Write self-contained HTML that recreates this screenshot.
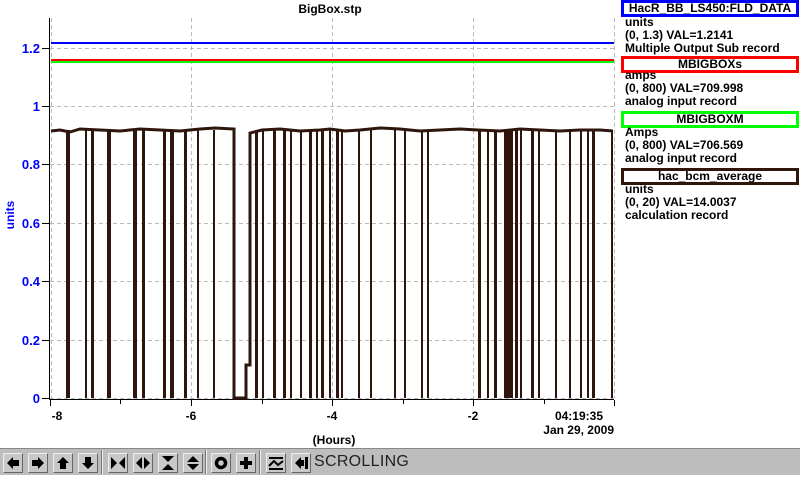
<!DOCTYPE html>
<html><head><meta charset="utf-8"><style>
html,body{margin:0;padding:0;background:#fff;width:800px;height:474px;overflow:hidden;font-family:"Liberation Sans",sans-serif;}
.t{position:absolute;font-size:12px;font-weight:bold;color:#000;white-space:nowrap;line-height:13px}
.box{position:absolute;left:621px;width:172px;height:11px;border:3px solid;text-align:center;font-size:12px;font-weight:bold;line-height:11px;overflow:hidden;white-space:nowrap}
#tb{position:absolute;left:0;top:448px;width:800px;height:26px;background:#bdbdbd;border-top:1px solid #888;}
.b{position:absolute;top:4px;width:18px;height:18px;background:#c8c8c8;border:1px solid;border-color:#eee #666 #666 #eee;}
.sep{position:absolute;top:1px;width:1px;height:24px;background:#777;border-right:1px solid #eee}
</style></head><body>
<svg width="800" height="474" style="position:absolute;left:0;top:0" font-family="Liberation Sans, sans-serif" font-weight="bold">
<g stroke="#bbb" stroke-dasharray="4,3" stroke-width="1">
<line x1="50" y1="48.5" x2="614" y2="48.5"/><line x1="50" y1="106.5" x2="614" y2="106.5"/>
<line x1="50" y1="164.5" x2="614" y2="164.5"/><line x1="50" y1="223.5" x2="614" y2="223.5"/>
<line x1="50" y1="281.5" x2="614" y2="281.5"/><line x1="50" y1="340.5" x2="614" y2="340.5"/>
<line x1="50" y1="398.5" x2="614" y2="398.5"/>
<line x1="191.5" y1="18" x2="191.5" y2="398"/><line x1="332.5" y1="18" x2="332.5" y2="398"/>
<line x1="473.5" y1="18" x2="473.5" y2="398"/><line x1="614.5" y1="18" x2="614.5" y2="398"/>
<line x1="51.5" y1="18" x2="51.5" y2="398"/>
</g>
<line x1="51" y1="43" x2="614" y2="43" stroke="#0000ff" stroke-width="2"/>
<line x1="51" y1="60" x2="614" y2="60" stroke="#ff0000" stroke-width="2"/>
<line x1="51" y1="62" x2="614" y2="62" stroke="#00ff00" stroke-width="2"/>
<g stroke="#000" stroke-width="1">
<line x1="49.5" y1="18" x2="49.5" y2="400"/><line x1="49" y1="399.5" x2="614" y2="399.5"/>
<line x1="42" y1="48.5" x2="50" y2="48.5"/><line x1="42" y1="106.5" x2="50" y2="106.5"/><line x1="42" y1="164.5" x2="50" y2="164.5"/><line x1="42" y1="223.5" x2="50" y2="223.5"/><line x1="42" y1="281.5" x2="50" y2="281.5"/><line x1="42" y1="340.5" x2="50" y2="340.5"/><line x1="42" y1="398.5" x2="50" y2="398.5"/>
<line x1="50.5" y1="400" x2="50.5" y2="406"/><line x1="120.5" y1="400" x2="120.5" y2="404"/><line x1="191.5" y1="400" x2="191.5" y2="406"/><line x1="262.5" y1="400" x2="262.5" y2="404"/><line x1="332.5" y1="400" x2="332.5" y2="406"/><line x1="403.5" y1="400" x2="403.5" y2="404"/><line x1="473.5" y1="400" x2="473.5" y2="406"/><line x1="544.5" y1="400" x2="544.5" y2="404"/><line x1="614.5" y1="400" x2="614.5" y2="406"/>
</g>
<path fill="none" stroke="#2e160c" stroke-width="3" d="M51,131 L60,130 L70,132 L80,129 L100,130 L120,131 L140,129 L160,130 L180,131 L200,129 L215,128 L234,129 L234,398 L246,398 L246,365 L250,365 L250,133 L262,130 L280,129 L300,131 L320,130 L330,129 L345,131 L360,130 L380,128 L400,129 L420,131 L440,130 L460,129 L478,130 L500,131 L520,129 L540,130 L560,131 L580,130 L600,130 L613,131"/>
<g fill="#2e160c">
<rect x="66" y="130" width="4" height="268"/><rect x="85" y="130" width="2" height="268"/><rect x="91" y="130" width="3" height="268"/><rect x="107" y="130" width="4" height="268"/><rect x="133" y="130" width="4" height="268"/><rect x="142" y="130" width="3" height="268"/><rect x="163" y="130" width="3" height="268"/><rect x="170" y="130" width="4" height="268"/><rect x="184" y="130" width="3" height="268"/><rect x="197" y="130" width="2" height="268"/><rect x="213" y="130" width="2" height="268"/><rect x="255" y="130" width="3" height="268"/><rect x="262" y="130" width="2" height="268"/><rect x="273" y="130" width="3" height="268"/><rect x="283" y="130" width="3" height="268"/><rect x="290" y="130" width="2" height="268"/><rect x="300" y="130" width="2" height="268"/><rect x="309" y="130" width="3" height="268"/><rect x="316" y="130" width="2" height="268"/><rect x="321" y="130" width="3" height="268"/><rect x="329" y="130" width="2" height="268"/><rect x="336" y="130" width="3" height="268"/><rect x="341" y="130" width="2" height="268"/><rect x="358" y="130" width="2" height="268"/><rect x="370" y="130" width="2" height="268"/><rect x="394" y="130" width="2" height="268"/><rect x="404" y="130" width="2" height="268"/><rect x="421" y="130" width="2" height="268"/><rect x="427" y="130" width="2" height="268"/><rect x="478" y="130" width="3" height="268"/><rect x="487" y="130" width="2" height="268"/><rect x="494" y="130" width="3" height="268"/><rect x="504" y="130" width="9" height="268"/><rect x="515" y="130" width="3" height="268"/><rect x="520" y="130" width="2" height="268"/><rect x="531" y="130" width="3" height="268"/><rect x="538" y="130" width="2" height="268"/><rect x="555" y="130" width="2" height="268"/><rect x="569" y="130" width="2" height="268"/><rect x="580" y="130" width="2" height="268"/><rect x="587" y="130" width="2" height="268"/><rect x="592" y="130" width="3" height="268"/><rect x="611" y="130" width="2" height="268"/>
</g>
<g fill="#0000ff" font-size="13" text-anchor="end">
<text x="40" y="53">1.2</text><text x="40" y="111">1</text><text x="40" y="169">0.8</text><text x="40" y="228">0.6</text><text x="40" y="286">0.4</text><text x="40" y="345">0.2</text><text x="40" y="403">0</text>
</g>
<text x="14" y="215" fill="#0000ff" font-size="12" transform="rotate(-90 14 215)" text-anchor="middle">units</text>
<g font-size="12" text-anchor="middle" fill="#000">
<text x="57" y="420">-8</text><text x="191" y="420">-6</text><text x="332" y="420">-4</text><text x="473" y="420">-2</text>
<text x="334" y="444">(Hours)</text>
<text x="330" y="13">BigBox.stp</text>
</g>
<g font-size="12" text-anchor="end" fill="#000"><text x="603" y="420">04:19:35</text><text x="614" y="434">Jan 29, 2009</text></g>
</svg>
<div class="box" style="top:0;border-color:#0000ff">HacR_BB_LS450:FLD_DATA</div>
<div class="t" style="left:625px;top:16px">units</div>
<div class="t" style="left:625px;top:29px">(0, 1.3) VAL=1.2141</div>
<div class="t" style="left:625px;top:42px">Multiple Output Sub record</div>
<div class="box" style="top:56px;border-color:#ff0000">MBIGBOXs</div>
<div class="t" style="left:625px;top:69px">amps</div>
<div class="t" style="left:625px;top:82px">(0, 800) VAL=709.998</div>
<div class="t" style="left:625px;top:95px">analog input record</div>
<div class="box" style="top:111px;border-color:#00ff00">MBIGBOXM</div>
<div class="t" style="left:625px;top:126px">Amps</div>
<div class="t" style="left:625px;top:139px">(0, 800) VAL=706.569</div>
<div class="t" style="left:625px;top:152px">analog input record</div>
<div class="box" style="top:168px;border-color:#2e160c">hac_bcm_average</div>
<div class="t" style="left:625px;top:183px">units</div>
<div class="t" style="left:625px;top:196px">(0, 20) VAL=14.0037</div>
<div class="t" style="left:625px;top:209px">calculation record</div>
<div id="tb">
<div class="b" style="left:3px"><svg width="18" height="18"><path d="M3,9 L9,3 L9,6 L15,6 L15,12 L9,12 L9,15Z"/></svg></div>
<div class="b" style="left:28px"><svg width="18" height="18"><path d="M15,9 L9,3 L9,6 L3,6 L3,12 L9,12 L9,15Z"/></svg></div>
<div class="b" style="left:53px"><svg width="18" height="18"><path d="M9,3 L3,9 L6,9 L6,15 L12,15 L12,9 L15,9Z"/></svg></div>
<div class="b" style="left:78px"><svg width="18" height="18"><path d="M9,15 L3,9 L6,9 L6,3 L12,3 L12,9 L15,9Z"/></svg></div>
<div class="sep" style="left:101px"></div>
<div class="b" style="left:108px"><svg width="18" height="18"><path d="M2,3 L8,9 L2,15Z M16,3 L10,9 L16,15Z"/></svg></div>
<div class="b" style="left:133px"><svg width="18" height="18"><path d="M8,3 L2,9 L8,15Z M10,3 L16,9 L10,15Z"/></svg></div>
<div class="b" style="left:158px"><svg width="18" height="18"><path d="M3,2 L15,2 L9,8Z M3,16 L15,16 L9,10Z"/></svg></div>
<div class="b" style="left:183px"><svg width="18" height="18"><path d="M3,8 L15,8 L9,2Z M3,10 L15,10 L9,16Z"/></svg></div>
<div class="sep" style="left:205px"></div>
<div class="b" style="left:211px"><svg width="18" height="18"><circle cx="9" cy="9" r="4.5" fill="none" stroke="#000" stroke-width="3.5"/></svg></div>
<div class="b" style="left:236px"><svg width="18" height="18"><path d="M7,3 L11,3 L11,7 L15,7 L15,11 L11,11 L11,15 L7,15 L7,11 L3,11 L3,7 L7,7Z"/></svg></div>
<div class="sep" style="left:259px"></div>
<div class="b" style="left:266px"><svg width="18" height="18"><rect x="2" y="3" width="14" height="2"/><rect x="2" y="14" width="14" height="2"/><path d="M2,12 L7,7 L11,11 L16,7" fill="none" stroke="#000" stroke-width="2"/></svg></div>
<div class="b" style="left:291px"><svg width="18" height="18"><path d="M3,9 L9,3 L9,6 L12,6 L12,12 L9,12 L9,15Z"/><rect x="13" y="3" width="3" height="12"/></svg></div>
<div style="position:absolute;left:314px;top:4px;font-size:16px;color:#222;letter-spacing:0.3px">SCROLLING</div>
</div>
</body></html>
